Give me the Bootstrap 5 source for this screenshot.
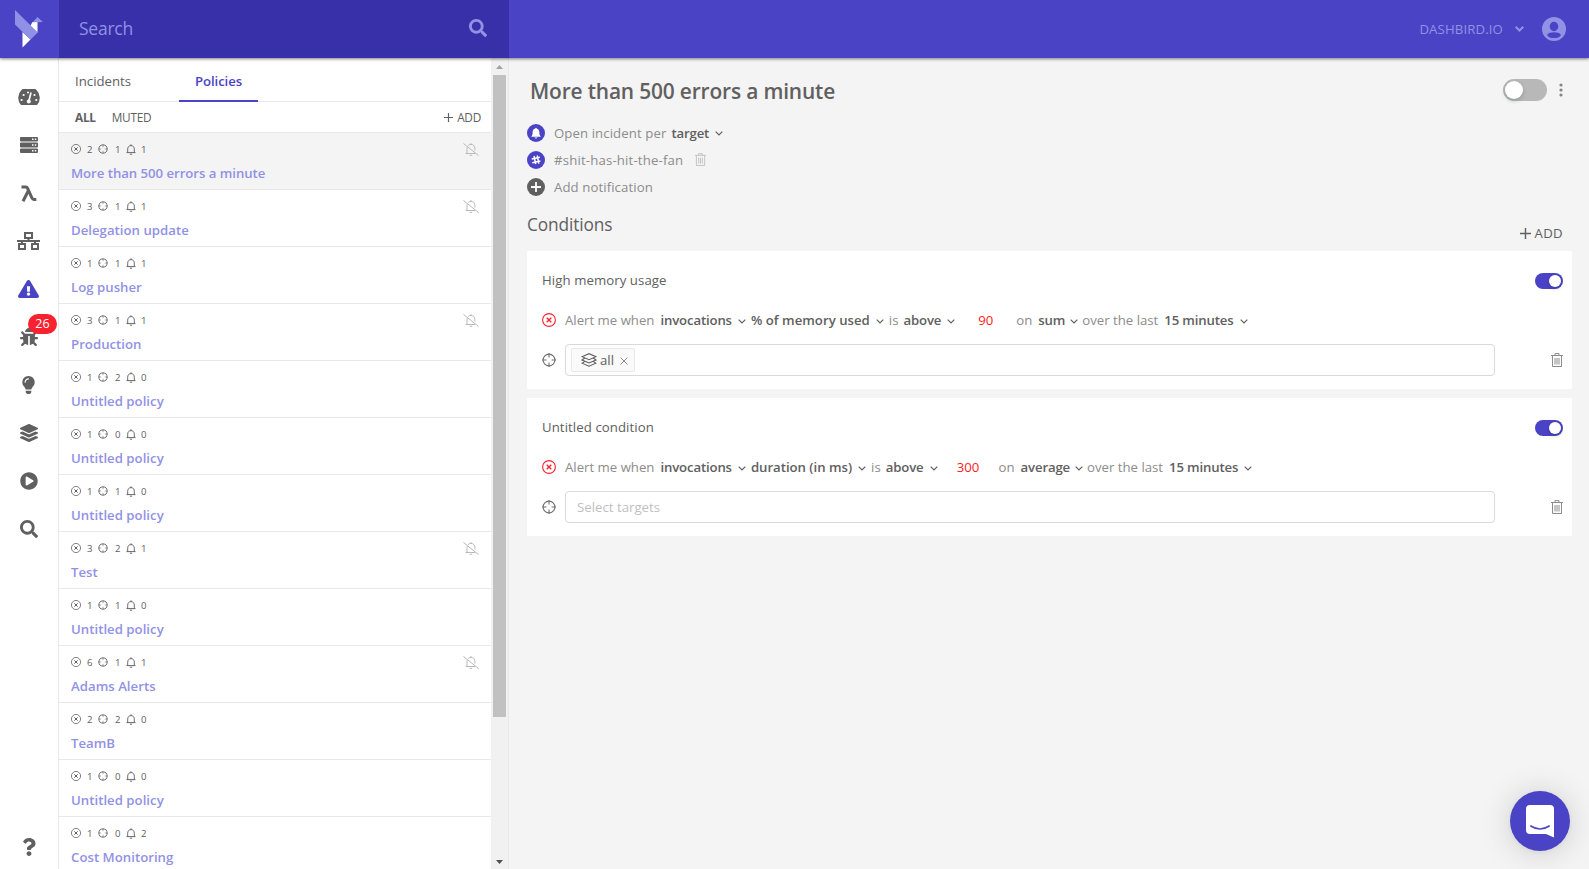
<!DOCTYPE html>
<html lang="en">
<head>
<meta charset="utf-8">
<meta name="viewport" content="width=device-width, initial-scale=1">
<title>Dashbird – Policies</title>
<link rel="stylesheet" href="https://cdn.jsdelivr.net/npm/bootstrap@5.3.0/dist/css/bootstrap.min.css">
<style>
:root{--brand:#4b43c6;--brand-dark:#3730a9;--brand-soft:#9191e5;--ink:#606060;--mute:#8c8c8c;--line:#e8e8e8;--wash:#f4f4f4}
body{font-family:"Open Sans","Noto Sans",sans-serif;font-size:13.2px;line-height:20px;color:var(--ink);letter-spacing:.02px;overflow:hidden;background:var(--wash)}
svg{display:block;flex:none;fill:none}
.f{fill:currentColor}
.s{stroke:currentColor}
.topbar{height:58px;background:var(--brand);box-shadow:0 1px 3px rgba(0,0,0,.5);z-index:5;color:var(--brand-soft)}
.logo-cell{width:59px;padding-left:15px}
.search-cell{width:450px;background:var(--brand-dark);padding:0 22px 2px 20px}
.search-text{font-size:17.5px;letter-spacing:-.24px}
.org{font-size:13.2px;letter-spacing:.13px}
.side{width:59px;border-right:1px solid var(--line);padding-top:15px;color:var(--ink)}
.side-item{height:48px;width:58px}
.side-item>svg.odd{margin-right:1px}
.count{background:#f8212f;width:29px;height:20px;left:28px;top:1px;font-size:12.5px;line-height:20px;border-radius:10px}
.listing{width:432px}
.tabs-row{height:44px;border-bottom:1px solid var(--line)}
.tab-item{padding:13px 16px 0;height:44px;border-bottom:2px solid transparent;margin-right:32px;width:88px}
.tab-item.on{color:var(--brand);border-color:var(--brand);font-weight:600;letter-spacing:-.09px;width:79px}
.filter-row{height:31px;border-bottom:1px solid var(--line);padding:0 10px 0 16px;font-size:11.8px;letter-spacing:-.25px}
.policy{height:57px;border-bottom:1px solid var(--line);padding:6px 12px 0}
.policy.on{background:var(--wash)}
.policy.on .pname{letter-spacing:-.04px}
.stats{display:grid;grid-template-columns:16px 11px 17px 11px 15px 10px;font-size:9.6px;letter-spacing:0;align-items:center;height:20px}
.stats span{padding-top:1px;line-height:19px}
.pname{font-weight:600;color:var(--brand-soft);line-height:20px;margin-top:4px}
.muted-ico{color:#b9b9b9;margin-top:1px}
.sbar{width:18px;background:#f1f1f1;border-right:1px solid var(--line);padding:7px 3px 5px 2px}
.thumb{height:642px;width:13px;background:#c1c1c1;margin-top:6px}
.main{padding:0 17px 0 18px}
.title{font-size:20.9px;font-weight:600;line-height:30px;margin:18px 0 17px 3px;letter-spacing:-.16px}
.toggle{width:44px;height:22px;border-radius:11px;background:#b8b8b8;padding:2px}
.knob{background:#fff;border-radius:50%;width:18px;height:18px;box-shadow:0 2px 4px rgba(0,35,11,.2)}
.toggle.tiny{width:28px;height:16px;background:var(--brand);margin-top:2px}
.toggle.tiny .knob{width:12px;height:12px}
.notes{margin-top:-4px}
.note{height:27px;color:var(--mute);letter-spacing:.09px}
.ball{width:18px;height:18px;margin-right:9px;color:#fff;background:var(--brand)}
.caret{margin-top:2px}
.b{font-weight:600;color:var(--ink);letter-spacing:-.15px}
.note .b{margin:0 6px 0 5px}
.sect{font-size:17.3px;line-height:24px;margin-top:13px;letter-spacing:-.13px}
.add-main{margin:23px 9px 1px 0;letter-spacing:.3px}
.cond{background:#fff;height:138px;padding:15px 9px 0 15px;margin-bottom:9px}
.cond-title{height:28px;letter-spacing:.08px}
.rule{height:24px;margin-top:14px;color:var(--mute);letter-spacing:0}
.num{width:61px;color:#ff1c1c}
.targets{width:930px;height:32px;border:1px solid #d9d9d9;border-radius:4px;background:#fff;padding:3px 5px;margin-left:9px}
.chip{height:24px;width:64px;border:1px solid var(--line);background:#fafafa;border-radius:2px;padding:0 6px 0 9px}
.ph{color:#bfbfbf;margin-left:6px}
.chat{right:19px;bottom:18px;width:60px;height:60px;background:var(--brand);box-shadow:0 1px 6px rgba(0,0,0,.06),0 2px 32px rgba(0,0,0,.16)}
</style>
</head>
<body class="vh-100 d-flex flex-column">
<svg width="0" height="0" class="position-absolute">
<symbol id="search" viewBox="0 0 512 512"><path fill="currentColor" d="M505 442.7L405.3 343c-4.5-4.5-10.6-7-17-7H372c27.6-35.3 44-79.7 44-128C416 93.1 322.9 0 208 0S0 93.1 0 208s93.1 208 208 208c48.3 0 92.7-16.4 128-44v16.3c0 6.4 2.5 12.5 7 17l99.7 99.7c9.4 9.4 24.6 9.4 33.9 0l28.3-28.3c9.4-9.4 9.4-24.6.1-34zM208 336c-70.7 0-128-57.2-128-128 0-70.7 57.2-128 128-128 70.7 0 128 57.2 128 128 0 70.7-57.2 128-128 128z"/></symbol>
<symbol id="err" viewBox="0 0 14 14"><g stroke="currentColor" fill="none"><circle cx="7" cy="7" r="6.4" stroke-width="1.1"/><path stroke-width="1.4" d="M4.7 4.7l4.6 4.6M9.3 4.7L4.7 9.3"/></g></symbol>
<symbol id="aim" viewBox="0 0 14 14"><g stroke="currentColor" fill="none" stroke-width="1.1"><circle cx="7" cy="7" r="5.900"/><path d="M7 0v4.400M7 9.600V14M0 7h4.400M9.600 7H14"/></g></symbol>
<symbol id="aim-sm" viewBox="0 0 10 10"><g stroke="currentColor" fill="none" stroke-width=".9"><circle cx="5" cy="5" r="4.100"/><path stroke-opacity=".6" d="M5 .3v2.900M5 6.800v2.900M.3 5h2.900M6.800 5h2.900"/></g></symbol>
<symbol id="bell" viewBox="0 0 10 11"><path stroke="currentColor" fill="none" stroke-width=".95" d="M.5 8.600h9M1.700 8.500V5.200C1.700 3 3 1.600 5 1.600s3.300 1.400 3.300 3.600v3.300M5 .3v1.200M3.900 10.200h2.200"/></symbol>
<symbol id="belloff" viewBox="0 0 16 13"><path stroke="currentColor" fill="none" stroke-width="1" d="M.5.5l15 12M2.500 10.500h9.800M4 10.300V5.500l.3-1.400M5.200 2.500C6 1.700 7 1.400 8 1.400c2.400 0 3.900 1.600 3.900 4.100v2M8 .2v1.200M6.700 12.300h2.500"/></symbol>
<symbol id="bin" viewBox="0 0 12 14"><path stroke="currentColor" fill="none" stroke-width="1" d="M0 2.500h12M1.500 3v10.500h9V3M4 2V.6h4V2M4 5v6.500M6 5v6.500M8 5v6.500"/></symbol>
<symbol id="down" viewBox="0 0 8 5"><path stroke="#606060" fill="none" stroke-width="1.200" d="M.7.7L4 4 7.300.7"/></symbol>
<symbol id="plus" viewBox="0 0 10 10"><path stroke="currentColor" stroke-width="1.300" d="M5 0v10M0 5h10"/></symbol>
</svg>

<header class="topbar d-flex align-items-center position-relative flex-shrink-0">
  <div class="logo-cell d-flex"><svg width="28" height="38" viewBox="0 0 28 38"><path fill="#fff" d="M22.500 12v10.500L15 16.500 17.500 12zM7.500 22v15.500l8-8z"/><path fill="#8f91e6" d="M0 0l22.800 22.500-7.300 7L0 14.500zM17.800 12.200L22.500 7l5.300 5z"/></svg></div>
  <div class="search-cell h-100 d-flex align-items-center justify-content-between"><span class="search-text">Search</span><svg width="18" height="18"><use href="#search"/></svg></div>
  <div class="ms-auto d-flex align-items-center"><span class="org">DASHBIRD.IO</span><svg style="margin:0 18px 1px 12px" width="9" height="6"><path class="s" stroke-width="2" d="M.7.8l3.800 3.700L8.300.8"/></svg><svg style="margin:0 23px 1px 0" width="24" height="24"><path class="f" fill-rule="evenodd" d="M12 0a12 12 0 1 1 0 24a12 12 0 1 1 0-24zM12 4.800a4.300 4.700 0 1 0 0 9.400a4.300 4.700 0 1 0 0-9.400zM12 15.200a6.800 2.900 0 1 0 0 5.800a6.800 2.900 0 1 0 0-5.800z"/></svg></div>
</header>

<div class="d-flex flex-grow-1 overflow-hidden">
  <nav class="side bg-white d-flex flex-column flex-shrink-0">
    <div class="side-item d-flex align-items-center justify-content-center"><svg width="22" height="16"><path class="f" d="M3 16A10.800 10.800 0 1 1 19 16z"/><path stroke="#fff" stroke-width="1.700" d="M11 11.500L13 3.500"/><g fill="#fff"><circle cx="10.800" cy="12.400" r="2"/><circle cx="3.600" cy="11" r="1.100"/><circle cx="5.600" cy="6" r="1.100"/><circle cx="10" cy="3.400" r="1"/><circle cx="16.500" cy="6" r="1.100"/><circle cx="18.300" cy="11" r="1.100"/></g></svg></div>
    <div class="side-item d-flex align-items-center justify-content-center"><svg width="18" height="16"><path class="f" d="M1 0h16q1 0 1 1v2.500q0 1-1 1H1q-1 0-1-1V1q0-1 1-1zM1 5.600h16q1 0 1 1V9.500q0 1-1 1H1q-1 0-1-1V6.600q0-1 1-1zM1 11.600h16q1 0 1 1V15q0 1-1 1H1q-1 0-1-1v-2.400q0-1 1-1z"/><path stroke="#fff" stroke-width="1.400" d="M12 2.300h1.500M14.800 2.300h1.500M12 8h1.500M14.800 8h1.500M12 13.800h1.500M14.800 13.800h1.500"/></svg></div>
    <div class="side-item d-flex align-items-center justify-content-center"><svg width="16" height="17"><path class="s" stroke-width="3" d="M.5 2h4.200q1.300 0 1.800 1.200L11 13q.6 1.500 2 1.500h2.300M7.200 6L2 16.300"/></svg></div>
    <div class="side-item d-flex align-items-center justify-content-center"><svg class="odd" width="23" height="18"><path class="s" stroke-width="2" d="M8 1h7v5H8zM2 12h6v5H2zM15 12h6v5h-6zM0 9h23M11.500 6v3M5 9v3M18 9v3"/></svg></div>
    <div class="side-item d-flex align-items-center justify-content-center" style="color:#4b43c6"><svg class="odd" width="21" height="18" viewBox="0 0 576 512" preserveAspectRatio="none"><path class="f" d="M569.517 440.013C587.975 472.007 564.806 512 527.94 512H48.054c-36.937 0-59.999-40.055-41.577-71.987L246.423 23.985c18.467-32.009 64.72-31.951 83.154 0l239.94 416.028zM288 354c-25.405 0-46 20.595-46 46s20.595 46 46 46 46-20.595 46-46-20.595-46-46-46zm-43.673-165.346l7.418 136c.347 6.364 5.609 11.346 11.982 11.346h48.546c6.373 0 11.635-4.982 11.982-11.346l7.418-136c.375-6.874-5.098-12.654-11.982-12.654h-63.383c-6.884 0-12.356 5.78-11.981 12.654z"/></svg></div>
    <div class="side-item d-flex align-items-center justify-content-center position-relative"><svg width="18" height="18" viewBox="0 0 512 512"><path class="f" d="M511.988 288.900c-.478 17.430-15.217 31.100-32.653 31.100H424v16c0 21.864-4.882 42.584-13.600 61.145l60.228 60.228c12.496 12.497 12.496 32.758 0 45.255-12.498 12.497-32.759 12.496-45.256 0l-54.736-54.736C345.886 467.965 314.351 480 280 480V236c0-6.627-5.373-12-12-12h-24c-6.627 0-12 5.373-12 12v244c-34.351 0-65.886-12.035-90.636-32.108l-54.736 54.736c-12.498 12.497-32.759 12.496-45.256 0-12.496-12.497-12.496-32.758 0-45.255l60.228-60.228C92.882 378.584 88 357.864 88 336v-16H32.666C15.230 320 .491 306.330.013 288.900-.484 270.816 14.028 256 32 256h56v-58.745l-46.628-46.628c-12.496-12.497-12.496-32.758 0-45.255 12.498-12.497 32.758-12.497 45.256 0L141.255 160h229.489l54.627-54.627c12.498-12.497 32.758-12.497 45.256 0 12.496 12.497 12.496 32.758 0 45.255L424 197.255V256h56c17.972 0 32.484 14.816 31.988 32.900zM257 0c-61.856 0-112 50.144-112 112h224C369 50.144 318.856 0 257 0z"/></svg><span class="count position-absolute text-white text-center">26</span></div>
    <div class="side-item d-flex align-items-center justify-content-center"><svg class="odd" width="13" height="18" viewBox="0 0 352 512"><path class="f" d="M96.060 454.350c.010 6.290 1.870 12.450 5.360 17.690l17.090 25.690a31.990 31.990 0 0 0 26.640 14.280h61.710a31.990 31.990 0 0 0 26.640-14.280l17.090-25.690a31.989 31.989 0 0 0 5.360-17.690l.040-38.350H96.010l.050 38.350zM0 176c0 44.370 16.450 84.850 43.560 115.780 16.520 18.850 42.360 58.230 52.210 91.450.040.260.070.520.110.780h160.240c.040-.260.070-.510.110-.780 9.850-33.220 35.690-72.600 52.210-91.450C335.550 260.850 352 220.370 352 176 352 78.610 272.910-.300 175.450 0 73.440.310 0 82.970 0 176zm176-80c-44.110 0-80 35.890-80 80 0 8.840-7.160 16-16 16s-16-7.160-16-16c0-61.760 50.240-112 112-112 8.840 0 16 7.160 16 16s-7.160 16-16 16z"/></svg></div>
    <div class="side-item d-flex align-items-center justify-content-center"><svg width="18" height="18" viewBox="0 0 512 512"><path class="f" d="M12.410 148.020l232.940 105.670c6.800 3.090 14.490 3.090 21.290 0l232.940-105.670c16.550-7.510 16.550-32.520 0-40.030L266.650 2.310a25.607 25.607 0 0 0-21.290 0L12.410 107.980c-16.550 7.510-16.550 32.530 0 40.040zm487.180 88.280l-58.090-26.330-161.640 73.270c-7.560 3.430-15.590 5.170-23.860 5.170s-16.290-1.740-23.860-5.170L70.510 209.970l-58.100 26.330c-16.550 7.500-16.550 32.500 0 40l232.940 105.590c6.800 3.080 14.490 3.080 21.290 0L499.590 276.300c16.550-7.500 16.550-32.500 0-40zm0 127.800l-57.870-26.230-161.860 73.370c-7.560 3.430-15.590 5.170-23.860 5.170s-16.290-1.740-23.860-5.170L70.290 337.870 12.410 364.100c-16.550 7.500-16.550 32.500 0 40l232.940 105.590c6.800 3.080 14.490 3.080 21.290 0L499.590 404.100c16.550-7.500 16.550-32.500 0-40z"/></svg></div>
    <div class="side-item d-flex align-items-center justify-content-center"><svg width="18" height="18" viewBox="0 0 512 512"><path class="f" d="M256 8C119 8 8 119 8 256s111 248 248 248 248-111 248-248S393 8 256 8zm115.700 272l-176 101c-15.800 8.800-35.700-2.500-35.700-21V152c0-18.400 19.800-29.800 35.700-21l176 107c16.400 9.200 16.400 32.900 0 42z"/></svg></div>
    <div class="side-item d-flex align-items-center justify-content-center"><svg width="18" height="18"><use href="#search"/></svg></div>
    <div class="side-item d-flex align-items-center justify-content-center mt-auto" style="height:44px"><svg width="14" height="18" viewBox="0 0 384 512"><path class="f" d="M202.021 0C122.202 0 70.503 32.703 29.914 91.026c-7.363 10.580-5.093 25.086 5.178 32.874l43.138 32.709c10.373 7.865 25.132 6.026 33.253-4.148 25.049-31.381 43.630-49.449 82.757-49.449 30.764 0 68.816 19.799 68.816 49.631 0 22.552-18.617 34.134-48.993 51.164-35.423 19.860-82.299 44.576-82.299 106.405V320c0 13.255 10.745 24 24 24h72.471c13.255 0 24-10.745 24-24v-5.773c0-42.860 125.268-44.645 125.268-160.627C377.504 66.256 286.902 0 202.021 0zM192 373.459c-38.196 0-69.271 31.075-69.271 69.271 0 38.195 31.075 69.270 69.271 69.270s69.271-31.075 69.271-69.271-31.075-69.270-69.271-69.270z"/></svg></div>
  </nav>

  <section class="listing bg-white flex-shrink-0">
    <div class="tabs-row d-flex"><div class="tab-item"><span>Incidents</span></div><div class="tab-item on"><span>Policies</span></div></div>
    <div class="filter-row d-flex align-items-center"><span class="fw-bold">ALL</span><span style="margin-left:16px">MUTED</span><span class="ms-auto d-flex align-items-center"><svg width="9" height="9" class="me-1"><use href="#plus"/></svg><span>ADD</span></span></div>
    <div id="policies"></div>
  </section>
  <div class="sbar flex-shrink-0 d-flex flex-column align-items-center"><svg width="7" height="4"><path fill="#a3a3a3" d="M0 4l3.500-4L7 4z"/></svg><div class="thumb"></div><svg class="mt-auto" width="7" height="4"><path fill="#505050" d="M0 0h7L3.500 4z"/></svg></div>

  <main class="main flex-grow-1">
    <div class="d-flex align-items-center"><h1 class="title">More than 500 errors a minute</h1><div class="toggle ms-auto" style="margin-bottom:1px"><div class="knob"></div></div><svg style="margin:0 9px 1px 12px" width="4" height="14"><g fill="#858585"><circle cx="2" cy="2" r="1.600"/><circle cx="2" cy="7" r="1.600"/><circle cx="2" cy="12" r="1.600"/></g></svg></div>
    <div class="notes">
    <div class="note d-flex align-items-center"><span class="ball rounded-circle"><svg width="18" height="18"><path class="f" d="M4.200 12.700q1.400-1.200 1.400-3.500V8Q5.700 5 8.300 4.500q0-.8.7-.8t.7.800Q12.300 5 12.400 8v1.200q0 2.300 1.400 3.500zM7.500 13.500h3q-.3 1-1.500 1t-1.500-1z"/></svg></span><span>Open incident per</span><span class="b">target</span><svg class="caret" width="8" height="5"><use href="#down"/></svg></div>
    <div class="note d-flex align-items-center"><span class="ball rounded-circle"><svg width="18" height="18"><path class="s" stroke-width="1.500" d="M7 5l1.700 8.200M10.200 4.500l1.700 8.200M4.700 7.900l8.200-1.700M5.200 11.700l8.200-1.700"/></svg></span><span style="letter-spacing:.17px">#shit-has-hit-the-fan</span><svg style="margin-left:12px;color:#c0c0c0" width="11" height="13" viewBox="0 0 12 14"><use href="#bin"/></svg></div>
    <div class="note d-flex align-items-center"><span class="ball rounded-circle" style="background:#606060"><svg width="18" height="18"><path class="s" stroke-width="1.800" d="M9 4v10M4 9h10"/></svg></span><span>Add notification</span></div>
    </div>
    <div class="d-flex align-items-start justify-content-between"><h2 class="sect mb-0">Conditions</h2><span class="add-main d-flex align-items-center"><svg width="11" height="11" class="me-1"><use href="#plus"/></svg><span>ADD</span></span></div>
    <div style="height:7px"></div>
    <article class="cond">
      <div class="cond-title d-flex align-items-center justify-content-between"><span>High memory usage</span><div class="toggle tiny d-flex justify-content-end"><div class="knob"></div></div></div>
      <div class="rule d-flex align-items-center"><svg style="color:#f8212f;margin-right:9px" width="14" height="14"><use href="#err"/></svg><span>Alert me when</span><span class="b" style="margin:0 6px">invocations</span><svg class="caret" width="8" height="5"><use href="#down"/></svg><span class="b" style="margin:0 6px 0 5px;letter-spacing:.02px">% of memory used</span><svg class="caret" width="8" height="5"><use href="#down"/></svg><span style="margin-left:5px">is</span><span class="b" style="margin:0 6px 0 5px">above</span><svg class="caret" width="8" height="5"><use href="#down"/></svg><span class="num text-center">90</span><span>on</span><span class="b" style="margin:0 5px 0 6px">sum</span><svg class="caret" width="8" height="5"><use href="#down"/></svg><span style="margin-left:4px">over the last</span><span class="b" style="margin:0 6px">15 minutes</span><svg class="caret" width="8" height="5"><use href="#down"/></svg></div>
      <div class="d-flex align-items-center" style="margin-top:12px"><svg style="color:#707070" width="14" height="14"><use href="#aim"/></svg><div class="targets"><div class="chip d-flex align-items-center"><svg width="16" height="14"><path class="s" stroke-width="1.100" d="M1 3.700L8 .7l7 3-7 3zM3.500 5.300L1 7l7 3 7-3-2.500-1.700M3.500 8.600L1 10.200l7 3 7-3-2.500-1.600"/></svg><span style="margin-left:3px">all</span><svg class="ms-auto" style="margin-top:1px" width="8" height="8"><path stroke="#8c8c8c" d="M.5.5l7 7M7.500.5l-7 7"/></svg></div></div><svg class="ms-auto" style="color:#8c8c8c" width="12" height="14"><use href="#bin"/></svg></div>
    </article>
    <article class="cond">
      <div class="cond-title d-flex align-items-center justify-content-between"><span>Untitled condition</span><div class="toggle tiny d-flex justify-content-end"><div class="knob"></div></div></div>
      <div class="rule d-flex align-items-center"><svg style="color:#f8212f;margin-right:9px" width="14" height="14"><use href="#err"/></svg><span>Alert me when</span><span class="b" style="margin:0 6px">invocations</span><svg class="caret" width="8" height="5"><use href="#down"/></svg><span class="b" style="margin:0 6px 0 5px;letter-spacing:-.02px">duration (in ms)</span><svg class="caret" width="8" height="5"><use href="#down"/></svg><span style="margin-left:5px">is</span><span class="b" style="margin:0 6px 0 5px">above</span><svg class="caret" width="8" height="5"><use href="#down"/></svg><span class="num text-center">300</span><span>on</span><span class="b" style="margin:0 5px 0 6px">average</span><svg class="caret" width="8" height="5"><use href="#down"/></svg><span style="margin-left:4px">over the last</span><span class="b" style="margin:0 6px">15 minutes</span><svg class="caret" width="8" height="5"><use href="#down"/></svg></div>
      <div class="d-flex align-items-center" style="margin-top:12px"><svg style="color:#707070" width="14" height="14"><use href="#aim"/></svg><div class="targets d-flex align-items-center"><span class="ph">Select targets</span></div><svg class="ms-auto" style="color:#8c8c8c" width="12" height="14"><use href="#bin"/></svg></div>
    </article>
  </main>
</div>
<button class="chat btn p-0 border-0 rounded-circle position-fixed d-flex align-items-center justify-content-center"><svg width="28" height="33"><path fill="#fff" d="M4 0h20q4 0 4 4v28.500L20 29H4q-4 0-4-4V4q0-4 4-4z"/><path stroke="#4b43c6" stroke-width="1.600" stroke-linecap="round" d="M4.800 21q9.200 6 18.400 0"/></svg></button>

<script src="https://cdn.jsdelivr.net/npm/bootstrap@5.3.0/dist/js/bootstrap.bundle.min.js"></script>
<script>
const policies=[[2,1,1,'More than 500 errors a minute',1],[3,1,1,'Delegation update',1],[1,1,1,'Log pusher',0],[3,1,1,'Production',1],[1,2,0,'Untitled policy',0],[1,0,0,'Untitled policy',0],[1,1,0,'Untitled policy',0],[3,2,1,'Test',1],[1,1,0,'Untitled policy',0],[6,1,1,'Adams Alerts',1],[2,2,0,'TeamB',0],[1,0,0,'Untitled policy',0],[1,0,2,'Cost Monitoring',0]];
document.getElementById('policies').innerHTML=policies.map((p,i)=>`<div class="policy${i?'':' on'}"><div class="d-flex align-items-center justify-content-between"><div class="stats"><svg width="10" height="10"><use href="#err"/></svg><span>${p[0]}</span><svg width="10" height="10"><use href="#aim-sm"/></svg><span>${p[1]}</span><svg width="10" height="11"><use href="#bell"/></svg><span>${p[2]}</span></div>${p[4]?'<svg class="muted-ico" width="16" height="13"><use href="#belloff"/></svg>':''}</div><div class="pname">${p[3]}</div></div>`).join('');
</script>
</body>
</html>
